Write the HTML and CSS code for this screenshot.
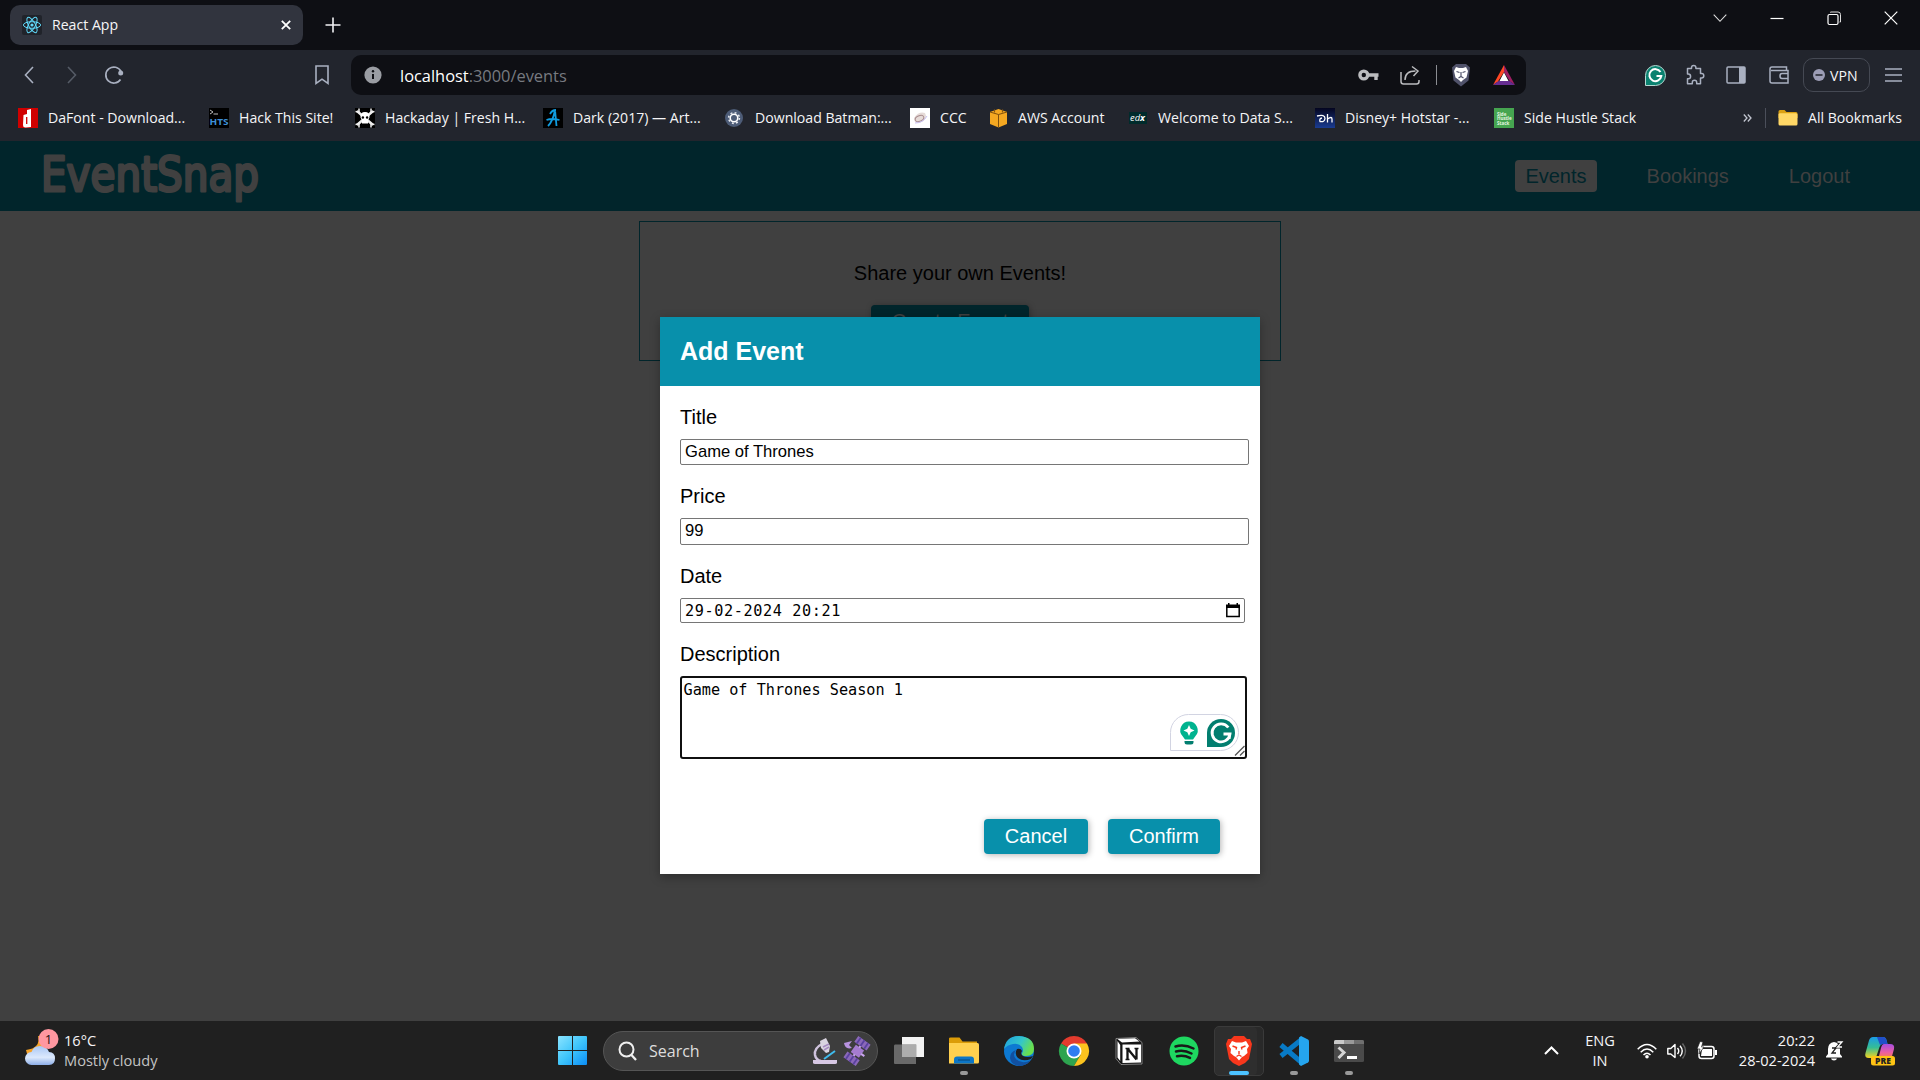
FILE: index.html
```html
<!DOCTYPE html>
<html lang="en">
<head>
<meta charset="utf-8">
<title>React App</title>
<link rel="stylesheet" href="styles.css">
</head>
<body>
<div class="tabstrip">
  <div class="tab">
    <svg class="favicon" width="20" height="20" viewBox="0 0 20 20"><rect width="20" height="20" rx="2" fill="#20232a"/><g fill="none" stroke="#61dafb" stroke-width="1"><ellipse cx="10" cy="10" rx="8.6" ry="3.3"/><ellipse cx="10" cy="10" rx="8.6" ry="3.3" transform="rotate(60 10 10)"/><ellipse cx="10" cy="10" rx="8.6" ry="3.3" transform="rotate(120 10 10)"/></g><circle cx="10" cy="10" r="1.6" fill="#61dafb"/></svg>
    <span class="tab-title">React App</span>
    <svg class="tab-close" width="10" height="10" viewBox="0 0 10 10"><path d="M.8.8l8.4 8.4M9.2.8L.8 9.2" stroke="#fff" stroke-width="1.800"/></svg>
  </div>
  <svg class="new-tab" width="16" height="16" viewBox="0 0 16 16"><path d="M8 .5v15M.5 8h15" stroke="#f2f2f4" stroke-width="1.600"/></svg>
  <div class="window-controls">
    <svg width="14" height="14" viewBox="0 0 14 14"><path d="M.7 3.700L7 10.300l6.300-6.600" fill="none" stroke="#ddd" stroke-width="1.100"/></svg>
    <svg width="14" height="14" viewBox="0 0 14 14"><path d="M.5 7.500h13" stroke="#fff" stroke-width="1.200"/></svg>
    <svg width="14" height="14" viewBox="0 0 14 14"><path d="M3.500 1.500v-.5h7.500q2.500 0 2.500 2.500v7.500h-1" fill="none" stroke="#ddd"/><rect x="1" y="3.500" width="10" height="10" rx="1.500" fill="none" stroke="#fff" stroke-width="1.200"/></svg>
    <svg width="14" height="14" viewBox="0 0 14 14"><path d="M.7.7l12.600 12.600M13.300.7L.7 13.300" stroke="#fff" stroke-width="1.200"/></svg>
  </div>
</div>

<div class="toolbar">
  <svg class="back" width="10" height="18" viewBox="0 0 10 18"><path d="M9 1L1.500 9 9 17" fill="none" stroke="#a9b0c0" stroke-width="1.600"/></svg>
  <svg class="forward" width="10" height="18" viewBox="0 0 10 18"><path d="M1 1l7.500 8L1 17" fill="none" stroke="#555b66" stroke-width="1.600"/></svg>
  <svg class="reload" width="20" height="20" viewBox="0 0 20 20"><path d="M16.500 14.500A8 8 0 1 1 17 6.500" fill="none" stroke="#a9b0c0" stroke-width="1.700"/><circle cx="16.700" cy="8" r="2.500" fill="#a9b0c0"/></svg>
  <svg class="save-page" width="14" height="20" viewBox="0 0 14 20"><path d="M1 1h12v17.500l-6-4.300-6 4.300z" fill="none" stroke="#a9b0c0" stroke-width="1.600"/></svg>
  <div class="address">
    <svg width="18" height="18" viewBox="0 0 18 18"><circle cx="9" cy="9" r="8.600" fill="#9a9da3"/><path d="M9 8v5" stroke="#0e0f13" stroke-width="2"/><circle cx="9" cy="5.200" r="1.200" fill="#0e0f13"/></svg>
    <span class="url"><b>localhost</b>:3000/events</span>
    <svg class="key" width="21" height="14" viewBox="0 0 21 14"><circle cx="5.800" cy="7" r="3.900" fill="none" stroke="#bbbcbf" stroke-width="3.400"/><path d="M10 7h10.500M18 7v5" fill="none" stroke="#bbbcbf" stroke-width="3.400"/></svg>
    <svg class="share" width="20" height="20" viewBox="0 0 20 20"><path d="M1 7v9.500Q1 19 3.500 19h13q2.500 0 2.500-2.500V15M5 15Q5 6 15.500 6M12 1.500l6 4.500-4.500 5" fill="none" stroke="#bbbcbf" stroke-width="1.500"/></svg>
    <i class="address-divider"></i>
    <svg class="shield" width="20" height="24" viewBox="0 0 20 24"><path d="M5 1h10l4 3.500-1.500 13L10 23.500 2.500 17.500 1 4.500z" fill="#50526a"/><path d="M5 4l3 1h4l3-1 2 4-1.500 6.500L12 17l-2 2-2-2-3.500-2.500L3 8z" fill="#fff"/><path d="M5.500 8.500l3 1M14.500 8.500l-3 1M10 9v4M7.500 15l2.500-1.500 2.500 1.500" fill="none" stroke="#50526a" stroke-width="1.200"/></svg>
    <svg class="bat" width="22" height="20" viewBox="0 0 22 20"><path d="M11 0L0 20l5-3.500L11 7z" fill="#ff4724"/><path d="M11 0l11 20-5-3.500L11 7z" fill="#9e1f63"/><path d="M0 20h22l-5.500-4h-11z" fill="#662d91"/><path d="M11 7.500L6.500 16h9z" fill="#fff"/></svg>
  </div>
  <div class="extensions">
    <svg width="21" height="21" viewBox="0 0 21 21"><path d="M.5 20.500V10.500a10 10 0 1 1 10 10z" fill="#0b8270" stroke="#b6d8d2"/><path d="M15.500 7a6 6 0 1 0 .8 4H11.500" fill="none" stroke="#fff" stroke-width="2"/></svg>
    <svg class="puzzle" width="20" height="20" viewBox="0 0 20 20"><path d="M2.500 3.500h4V2.700a2.200 2.200 0 0 1 4.400 0v.8h4.600v5h1.100a2.200 2.200 0 0 1 0 4.400h-1.100v5.800h-3.800v-1.200a2.200 2.200 0 0 0-4.400 0v1.200H2.500v-5h.8a2.300 2.300 0 0 0 0-4.600h-.8z" fill="none" stroke="#a9b0c0" stroke-width="1.500" stroke-linejoin="round"/></svg>
    <svg class="sidebar-icon" width="20" height="18" viewBox="0 0 20 18"><rect x="1" y="1" width="18" height="16" rx="1" fill="none" stroke="#a9b0c0" stroke-width="1.500"/><path d="M13 1h6v16h-6z" fill="#a9b0c0"/></svg>
    <svg class="wallet" width="20" height="18" viewBox="0 0 20 18"><path d="M17.500 4.500V1H3Q1 1 1 3v12q0 2 2 2h16V4.500H2M19 7.500h-6q-2 0-2 2.500t2 2.500h6" fill="none" stroke="#a9b0c0" stroke-width="1.500"/></svg>
    <div class="vpn"><svg width="12" height="12" viewBox="0 0 12 12"><circle cx="6" cy="6" r="6" fill="#9c9db5"/><path d="M2.500 6h7" stroke="#22252d" stroke-width="1.500"/></svg><span>VPN</span></div>
    <svg class="menu" width="17" height="14" viewBox="0 0 17 14"><path d="M0 1h17M0 7h17M0 13h17" stroke="#a9b0c0" stroke-width="1.500"/></svg>
  </div>
</div>

<div class="bookmarks">
  <div class="bookmark-list">
    <div class="bookmark"><svg width="20" height="20" viewBox="0 0 20 20"><rect width="20" height="20" fill="#d00000"/><path d="M9 6l-3.500 1L5 17q0 3 3 2.500l5-.5V1L9 2z" fill="#fff"/><path d="M8.700 9v7" stroke="#d00000" stroke-width="1.300"/></svg><span>DaFont - Download...</span></div>
    <div class="bookmark"><svg width="20" height="20" viewBox="0 0 20 20"><rect width="20" height="20" fill="#000"/><path d="M1 2l3 2-3 2M4.500 6H9" fill="none" stroke="#bbb"/><text x="0.500" y="17" class="hts" textLength="19" lengthAdjust="spacingAndGlyphs">HTS</text></svg><span>Hack This Site!</span></div>
    <div class="bookmark"><svg width="20" height="20" viewBox="0 0 20 20"><rect width="20" height="20" fill="#000"/><path d="M2 3l16 14M18 3L2 17" stroke="#eee" stroke-width="2.500"/><path d="M.5 3.500L4 4l0-3.500M16 .5V4l3.500-.5M.5 16.500L4 16v3.500M19.500 16.500L16 16v3.500" fill="none" stroke="#eee" stroke-width="1.500"/><path d="M10 4q5 0 4.500 5.500l-1.500 2.500V15.500H7V12l-1.500-2.500Q5 4 10 4z" fill="#fff"/><circle cx="7.900" cy="9.500" r="1.200"/><circle cx="12.100" cy="9.500" r="1.200"/></svg><span>Hackaday | Fresh H...</span></div>
    <div class="bookmark"><svg width="20" height="20" viewBox="0 0 20 20"><rect width="20" height="20" fill="#000"/><path d="M5 18Q10 13 12 2l1.500 16M7 6Q9 2 13 2M3.500 12q5-2 13 0" fill="none" stroke="#109ce0" stroke-width="1.800"/></svg><span>Dark (2017) — Art...</span></div>
    <div class="bookmark"><svg width="20" height="20" viewBox="0 0 20 20"><circle cx="9" cy="10" r="9" fill="#4d5c77"/><circle cx="9" cy="10" r="3.800" fill="none" stroke="#fff" stroke-width="1.600"/><circle cx="9" cy="10" r="5.400" fill="none" stroke="#e8ebf0" stroke-width="1.500" stroke-dasharray="1.900 2.340"/></svg><span>Download Batman:...</span></div>
    <div class="bookmark"><svg width="20" height="20" viewBox="0 0 20 20"><rect width="20" height="20" fill="#fff"/><path d="M4 10q5-7 11-5l1 3q-1 7-9 7-3-1-3-5z" fill="#e6dbd8"/><ellipse cx="9.500" cy="10.500" rx="4.500" ry="2.800" fill="none" stroke="#a98d8f" transform="rotate(-25 9.500 10.500)"/><path d="M5 15q8 0 12-7" fill="none" stroke="#c7c0f1"/></svg><span>CCC</span></div>
    <div class="bookmark"><svg width="19" height="20" viewBox="0 0 19 20"><path d="M1 4l8.500-3L18 4v12l-8.500 3.500L1 16z" fill="#f5a821"/><path d="M1 4l8.500 2.500L18 4M9.500 6.500v13" fill="none" stroke="#7f4f0d"/><path d="M5.500 1.500v3M13.500 1.500v3" stroke="#8e5a10" stroke-width="1.200"/></svg><span>AWS Account</span></div>
    <div class="bookmark"><svg width="20" height="20" viewBox="0 0 20 20"><rect x="1" y="4" width="18" height="12" fill="#002b2b"/><text x="2" y="13" class="edx" textLength="15" lengthAdjust="spacingAndGlyphs">ed<tspan font-weight="700">x</tspan></text></svg><span>Welcome to Data S...</span></div>
    <div class="bookmark"><svg width="20" height="20" viewBox="0 0 20 20"><defs><linearGradient id="dis" x2="0" y2="1"><stop stop-color="#04051f"/><stop offset="1" stop-color="#1a3c92"/></linearGradient></defs><rect width="20" height="20" fill="url(#dis)"/><path d="M2 8q8-2 8 2.500-.5 4-5 3-1-3 2-3.500M12.500 6v8.500M12.500 11q4.500-3 4.500 0v3.500" fill="none" stroke="#fff" stroke-width="1.300"/></svg><span>Disney+ Hotstar -...</span></div>
    <div class="bookmark"><svg width="20" height="20" viewBox="0 0 20 20"><rect width="20" height="20" fill="#46a550"/><g class="shs"><text x="3" y="7.500">Side</text><text x="3" y="12">Hustle</text><text x="3" y="16.500">Stack</text></g></svg><span>Side Hustle Stack</span></div>
  </div>
  <svg class="more" width="9" height="8" viewBox="0 0 9 8"><path d="M.8.5L4 4 .8 7.500M4.800.5L8 4 4.800 7.500" fill="none" stroke="#c2c6d0" stroke-width="1.300"/></svg>
  <i class="bookmark-divider"></i>
  <svg class="folder" width="20" height="16" viewBox="0 0 20 16"><path d="M.5 1.500q0-1.500 1.500-1.500h4.500l2 2H18q1.500 0 1.500 1.500V8H.5z" fill="#dba013"/><path d="M.5 4.500Q.5 3.200 2 3.200h16q1.500 0 1.500 1.500v9.300q0 1.500-1.500 1.500H2q-1.500 0-1.500-1.500z" fill="#ffd766"/></svg>
  <span class="all-bookmarks">All Bookmarks</span>
</div>

<div class="viewport">
  <header class="main-nav">
    <svg class="brand" width="220" height="64" viewBox="0 0 220 64"><text x="0" y="47" textLength="218" lengthAdjust="spacingAndGlyphs">EventSnap</text></svg>
    <nav><a class="active">Events</a><a>Bookings</a><a>Logout</a></nav>
  </header>
  <section class="events-control">
    <p>Share your own Events!</p>
    <div class="create">Create Event</div>
  </section>
  <div class="modal">
    <div class="modal-header">Add Event</div>
    <div class="form">
      <label>Title</label>
      <div class="field title">Game of Thrones</div>
      <label>Price</label>
      <div class="field price">99</div>
      <label>Date</label>
      <div class="field date"><span>29-02-2024 20:21</span><svg width="14" height="15" viewBox="0 0 14 15"><path d="M.8 4v9.500h12.400V4" fill="none" stroke="#000" stroke-width="1.500"/><path d="M0 1.500h14V5H0zM2 0h1.500v2H2zM10.500 0H12v2h-1.500z"/></svg></div>
      <label>Description</label>
      <div class="textarea">Game of Thrones Season 1
        <div class="grammarly">
          <svg width="18" height="24" viewBox="0 0 18 24"><path d="M9 .5a8.700 8.700 0 0 1 6.500 14.500L13 18.500H5L2.500 15A8.700 8.700 0 0 1 9 .5z" fill="#00b38f"/><path d="M9 4l1.700 3.800L14.500 9.500l-3.800 1.700L9 15l-1.700-3.800L3.500 9.500l3.800-1.700z" fill="#fff"/><path d="M4.500 20h9v1q0 2.500-2.500 2.500H7Q4.500 23.500 4.500 21z" fill="#027e6f"/></svg>
          <svg width="28" height="28" viewBox="0 0 28 28"><path d="M0 28V14a14 14 0 1 1 14 14z" fill="#027e6f"/><path d="M21.300 8.500a9 9 0 1 0 1.700 6.500h-6.500" fill="none" stroke="#fff" stroke-width="2.800"/><path d="M22.500 20v-5" stroke="#fff" stroke-width="2.200"/></svg>
        </div>
        <svg class="grip" width="11" height="11" viewBox="0 0 11 11"><path d="M1 10.500L10.500 1M6 10.500L10.500 6" stroke="#555" stroke-width="1.300"/></svg>
      </div>
    </div>
    <div class="actions"><div class="btn cancel">Cancel</div><div class="btn confirm">Confirm</div></div>
  </div>
</div>

<div class="taskbar">
  <div class="weather">
    <svg width="38" height="40" viewBox="0 0 38 40"><defs><linearGradient id="cl" x2="0" y2="1"><stop stop-color="#a9c7f5"/><stop offset=".6" stop-color="#dce9fc"/><stop offset="1" stop-color="#8daee8"/></linearGradient></defs><path d="M14 7q3 12-12 14 1 9 11 9 12-4 9-18-2-5-8-5z" fill="#f5a32a"/><path d="M7.500 36a6 6 0 0 1 0-13q2-6 8.500-6 7 0 9 6 6 0 6 6.500 0 6.500-6 6.500z" fill="url(#cl)"/><circle cx="24.500" cy="10" r="10" fill="#ff97a0"/><text x="24.500" y="15" text-anchor="middle" class="badge">1</text></svg>
    <div class="weather-text"><span>16°C</span><span class="muted">Mostly cloudy</span></div>
  </div>
  <div class="apps">
    <svg class="start" width="29" height="29" viewBox="0 0 29 29"><defs><linearGradient id="win" x2="1" y2="1"><stop stop-color="#8be4ff"/><stop offset=".5" stop-color="#3fc5fb"/><stop offset="1" stop-color="#0b8df5"/></linearGradient></defs><path d="M1 0h13v14H0V1q0-1 1-1zM15 0h13q1 0 1 1v13H15zM0 15h14v14H1q-1 0-1-1zM15 15h14v13q0 1-1 1H15z" fill="url(#win)"/></svg>
    <div class="search">
      <svg width="19" height="20" viewBox="0 0 19 20"><circle cx="8.500" cy="8.500" r="7" fill="none" stroke="#f0f0f0" stroke-width="2"/><path d="M13.500 14l4.500 5" stroke="#f0f0f0" stroke-width="2.300"/></svg>
      <span>Search</span>
      <svg class="scope" width="26" height="26" viewBox="0 0 26 26"><path d="M10 6Q2 10 3 17q1 5 6 6" fill="none" stroke="#cfc3dd" stroke-width="2.500"/><path d="M8 3l6-3 4 8-1 6-3 1-5-5z" fill="#d9d4e0"/><path d="M11 9l6-3M12 12l5-3" stroke="#a58bc0" stroke-width="1.500"/><path d="M12 21l11-8" stroke="#3fbcee" stroke-width="2"/><path d="M1 22h24v2.500q0 1.500-2 1.500H3q-2 0-2-1.500z" fill="#d7c8e4"/></svg>
      <svg class="satellite" width="28" height="28" viewBox="0 0 28 28"><g transform="rotate(35 14 14)"><path d="M9.500 9.500h10v9h-10z" fill="#a57cd0"/><path d="M6.500 1h15v7h-15zM6.500 20h15v7h-15z" fill="#8a68b8"/><path d="M9.500 1v7M14 1v7M18.500 1v7M9.500 20v7M14 20v7M18.500 20v7" stroke="#5a41a0" stroke-width="1.800"/><path d="M14 8v2M14 18v2M19 14h4" stroke="#c9a5ee" stroke-width="2"/></g><path d="M1 6q1 7 8 5L6 8l3-4" fill="#b792df"/></svg>
    </div>
    <svg class="taskview" width="30" height="28" viewBox="0 0 30 28"><path d="M8 0h22v20H8z" fill="#f3f3f3"/><path d="M1 7.500h21V27H1q-1 0-1-1v-17q0-1.500 1-1.500z" fill="#777" opacity=".85"/><path d="M8 7.500h14.500V20H8z" fill="#adadad"/></svg>
    <div class="app running"><svg width="30" height="28" viewBox="0 0 30 28"><path d="M0 1.500Q0 .5 1.500.5h9l3 4H28v8H0z" fill="#dc9c08"/><path d="M0 6h28.500q1.500 0 1.500 1.500v17.500q0 1.500-1.500 1.500H0z" fill="#ffd04f"/><path d="M5 26.500v-4q0-3 3-3h14q3 0 3 3v4z" fill="#0c76c7"/><path d="M9 23h12" stroke="#064679"/></svg></div>
    <div class="app"><svg width="30" height="30" viewBox="0 0 30 30"><defs><linearGradient id="ed" x2="1" y2=".4"><stop stop-color="#1e9fe0"/><stop offset=".6" stop-color="#34c6c9"/><stop offset="1" stop-color="#69df4e"/></linearGradient></defs><circle cx="15" cy="15" r="15" fill="#0d79d2"/><path d="M0 13Q2 0 15 0q15 1 15 13 0 7-8 7-5 0-4-3 2-2 0-6Q15 7 9 8 3 9 0 13z" fill="url(#ed)"/><path d="M12 14q-4 5 0 9 6 6 15 1-5 6-12 6-8-1-9-8 0-6 6-8z" fill="#1150a0"/><path d="M13 13q4-1 5 2-2 3 1 5 4 2 10 0l-2 3q-8 3-13-1-4-4-1-9z" fill="#202020"/></svg></div>
    <div class="app"><svg width="30" height="30" viewBox="0 0 30 30"><path d="M15 15L2 7.500A15 15 0 0 1 28 7.500z" fill="#e33b2e"/><path d="M15 15L2 7.500A15 15 0 0 0 15 30l6.500-11z" fill="#2da44f"/><path d="M15 7.500h13A15 15 0 0 1 15 30l6.500-11z" fill="#fcc31e"/><circle cx="15" cy="15" r="7.500" fill="#fff"/><circle cx="15" cy="15" r="5.800" fill="#2f7df1"/></svg></div>
    <div class="app"><svg width="28" height="28" viewBox="0 0 28 28"><path d="M1 1.500L21 .5l6 5V27l-21 .5-5-6z" fill="#151515" stroke="#999" stroke-width=".8"/><path d="M2.500 2L20 1.200 24.500 4.500 7 5.500z" fill="#fff"/><path d="M2.500 4L5.200 8v16l-2.700-3.500zM7.500 7.500H26v18L7.500 26z" fill="#fff"/><path d="M12.500 12v11M21.500 11v11.500M12.500 11.500l9 11" fill="none" stroke="#151515" stroke-width="2.300"/><path d="M10.500 11.500h4M19.500 11.500h4M10.500 22.500h4" stroke="#151515" stroke-width="1.400"/></svg></div>
    <div class="app"><svg width="30" height="30" viewBox="0 0 30 30"><circle cx="15" cy="15" r="14.500" fill="#1ed760"/><path d="M6.500 10.500q9-2.500 18 2M7 15.500q8-2 15.500 2M8 20.200q7-1.500 13 1.700" fill="none" stroke="#191919" stroke-width="2.500" stroke-linecap="round"/></svg></div>
    <div class="app active-app"><svg width="26" height="30" viewBox="0 0 26 30"><path d="M8 0h10l3 3 3 0 2 5-3 15-4 4-6 3-6-3-4-4L0 8l2-5h3z" fill="#f8371c"/><path d="M6 5l4 1.500h6L20 5l3 5-2 3 .5 4-3.500 3-2 1-3 3.500-3-3.500-2-1-3.500-3L5 13l-2-3z" fill="#fff"/><path d="M6.500 10l4 1.500-.5 2M19.500 10l-4 1.500.5 2M13 15v3M10.500 20.500l2.500-1.500 2.500 1.500" fill="none" stroke="#f8371c" stroke-width="1.400"/></svg></div>
    <div class="app running"><svg width="30" height="30" viewBox="0 0 30 30"><path d="M2 9l20 17M2 20L22 4" stroke="#087ac5" stroke-width="5" fill="none"/><path d="M22 0l7 3.500q1 .5 1 2v19q0 1.500-1 2L22 30l-2-1.500V1.500z" fill="#25a5ef"/></svg></div>
    <div class="app running"><svg width="30" height="22" viewBox="0 0 30 22"><rect width="30" height="22" rx="1.500" fill="#4a4a4a"/><path d="M0 1.500Q0 0 1.500 0H10v4H0z" fill="#c9c9c9"/><path d="M10 0h10v4H10z" fill="#999"/><path d="M20 0h8.500Q30 0 30 1.500V4H20z" fill="#6f6f6f"/><path d="M4.500 7.500l5.500 5-5.500 5.500" fill="none" stroke="#d5d5d5" stroke-width="3"/><path d="M13 17.500h10" stroke="#fff" stroke-width="3"/></svg></div>
  </div>
  <div class="tray">
    <svg width="15" height="9" viewBox="0 0 15 9"><path d="M1 8l6.500-6.500L14 8" fill="none" stroke="#fff" stroke-width="2"/></svg>
    <div class="lang"><span>ENG</span><span>IN</span></div>
    <svg class="wifi" width="20" height="16" viewBox="0 0 20 16"><path d="M.7 6.200q9.300-9.500 18.600 0M3.700 9.200q6.300-6.400 12.600 0M6.500 12q3.500-3.500 7 0" fill="none" stroke="#fff" stroke-width="1.500"/><circle cx="10" cy="13.800" r="1.800" fill="#fff"/></svg>
    <svg class="sound" width="20" height="18" viewBox="0 0 20 18"><path d="M.8 6.500h3L8 2.500v13L3.800 12h-3z" fill="none" stroke="#fff" stroke-width="1.400" stroke-linejoin="round"/><path d="M10.500 6q2.500 3 0 6M13 3.700q4.500 5.300 0 10.600" fill="none" stroke="#fff" stroke-width="1.400"/><path d="M15.500 1.500q6 7.500 0 15" fill="none" stroke="#666" stroke-width="1.400"/></svg>
    <svg class="battery" width="21" height="18" viewBox="0 0 21 18"><rect x="2" y="4.500" width="15" height="12" rx="2.500" fill="none" stroke="#fff" stroke-width="1.500"/><path d="M5 7h10v7H4zM18 8h2v5h-2z" fill="#fff"/><path d="M3-.5L0 7h3l-1 5 5-7H4.500l1.500-5z" fill="#fff" stroke="#202020" stroke-width=".7"/></svg>
    <div class="clock"><span>20:22</span><span>28-02-2024</span></div>
    <svg class="bell" width="18" height="20" viewBox="0 0 18 20"><path d="M8 1Q2 2 2 8v5l-2 2.500V16.500h16V15.500L14 13V8Q14 2 8 1z" fill="#fff"/><path d="M5 17.500h6q-.5 2-3 2t-3-2z" fill="#fff"/><path d="M6 7h4l-4 5h4" fill="none" stroke="#202020" stroke-width="1.300"/><path d="M11.500 1H16l-4.500 5H16" fill="none" stroke="#202020" stroke-width="3"/><path d="M11.500 1H16l-4.500 5H16" fill="none" stroke="#fff" stroke-width="1.300"/></svg>
    <svg class="copilot" width="30" height="30" viewBox="0 0 30 30"><defs><linearGradient id="ca" x2="0" y2="1"><stop stop-color="#1a9ce8"/><stop offset=".5" stop-color="#35bd95"/><stop offset="1" stop-color="#f6d31d"/></linearGradient><linearGradient id="cb" x2="0" y2="1"><stop stop-color="#a64de0"/><stop offset=".6" stop-color="#ec5fa3"/><stop offset="1" stop-color="#f98248"/></linearGradient></defs><path d="M8 1h10q2.500 0 3.500 3l1 4h-5q-2 0-3 3l-3 9q-1 2-3 2H4q-5 0-3.500-5L4 4.500Q5 1 8 1z" fill="url(#ca)"/><path d="M12 1h6q2.500 0 3.500 3l1 4h-5L15 9z" fill="#214fc9"/><path d="M19 8h6q5 0 4 5l-2.500 9H11l3-2 2-8q1-4 3-4z" fill="url(#cb)"/><rect x="6" y="20" width="24" height="9.500" rx="2.500" fill="#ffc414"/><text x="18" y="28" text-anchor="middle" class="pre">PRE</text></svg>
  </div>
</div>
</body>
</html>
```
FILE: styles.css
```css
* { box-sizing: border-box; }
body { margin: 0; width: 1920px; height: 1080px; overflow: hidden; background: #404040; font-family: "Open Sans", "Noto Sans", sans-serif; font-size: 14.100px; color: #f5f5f7; display: flex; flex-direction: column; }
svg { display: block; flex: none; overflow: visible; }
span { white-space: nowrap; }

.tabstrip { height: 50px; background: #0e0f14; display: flex; align-items: center; flex: none; }
.tab { margin-left: 10px; width: 293px; height: 40px; border-radius: 10px; background: #31343e; display: flex; align-items: center; padding: 0 12px; }
.tab-title { margin-left: 10px; padding-bottom: 2px; flex: 1; }
.new-tab { margin-left: 22px; }
.window-controls { display: flex; gap: 43px; margin: -14px 22px 0 auto; }

.toolbar { height: 50px; background: #22252d; display: flex; align-items: center; flex: none; }
.back { margin-left: 24px; }
.forward { margin-left: 33px; }
.reload { margin-left: 27px; }
.save-page { margin-left: 191px; }
.address { margin-left: 22px; width: 1175px; height: 40px; border-radius: 10px; background: #0e0f14; display: flex; align-items: center; padding: 0 11px 0 13px; }
.url { margin-left: 18px; flex: 1; font-size: 16.400px; color: #777a80; }
.url b { font-weight: 400; color: #fff; }
.share { margin-left: 21px; }
.address-divider { width: 1px; height: 20px; background: #8b8d92; margin-left: 16px; }
.shield { margin-left: 14px; }
.bat { margin-left: 22px; }
.extensions { display: flex; align-items: center; margin-left: 119px; }
.puzzle { margin-left: 19px; }
.sidebar-icon { margin-left: 21px; }
.wallet { margin-left: 23px; }
.vpn { margin-left: 14px; width: 67px; height: 34px; border: 1px solid #454953; border-radius: 10px; display: flex; align-items: center; gap: 5px; padding-left: 9px; }
.menu { margin-left: 15px; }

.bookmarks { height: 41px; background: #22252d; display: flex; align-items: center; flex: none; padding: 0 18px 5px; }
.bookmark-list { display: grid; grid-template-columns: 191px 146px 188px 182px 185px 79px 139px 187px 179px 142px; }
.bookmark { display: flex; align-items: center; gap: 10px; }
.bookmark span, .all-bookmarks { padding-bottom: 2px; }
.hts { font: 700 9px "Open Sans", sans-serif; fill: #3d8fd6; }
.edx { font: italic 9px "Open Sans", sans-serif; fill: #fff; }
.shs { font: 700 4.500px "Open Sans", sans-serif; fill: #e4f5e0; }
.more { margin-left: 107px; }
.bookmark-divider { width: 1px; height: 20px; background: #4b4f5a; margin-left: 13px; }
.folder { margin-left: 12px; }
.all-bookmarks { margin-left: 10px; }

.viewport { position: relative; height: 880px; flex: none; font-family: "Liberation Sans", Arial, sans-serif; font-size: 20px; color: #000; overflow: hidden; }
.main-nav { height: 70px; background: #01252b; display: flex; align-items: center; justify-content: space-between; padding: 0 60px 0 41px; }
.brand text { font: 48px "DejaVu Sans", sans-serif; fill: #404040; stroke: #404040; stroke-width: 3px; stroke-linejoin: round; }
.main-nav nav { display: flex; gap: 40px; color: #404040; }
.main-nav a { padding: 5px 10px 4px; border-radius: 4px; line-height: 23px; }
.main-nav .active { background: #404040; color: #01252b; }
.events-control { width: 642px; height: 140px; margin: 10px auto 0; border: 1px solid #01252b; text-align: center; }
.events-control p { margin: 40px 0 20px; line-height: 23px; }
.create { width: 158px; height: 36px; line-height: 33px; margin: 0 0 0 231px; border-radius: 4px; background: #01252b; color: #404040; box-shadow: 1px 1px 6px rgba(0,0,0,.3); }
.modal { position: absolute; left: 660px; top: 176px; width: 600px; height: 557px; background: #fff; box-shadow: 0 3px 10px rgba(0,0,0,.3); }
.modal-header { height: 69px; padding: 20px; background: #0890ab; color: #fff; font-size: 25px; font-weight: 700; line-height: 29px; }
.form { padding: 20px 0 0 20px; display: flex; flex-direction: column; }
.form label { height: 23px; line-height: 23px; margin-bottom: 10px; }
.field { width: 569px; height: 26px; border: 1px solid #767676; border-radius: 2px; padding-left: 4px; font-size: 16.600px; line-height: 23px; }
.title { margin-bottom: 20px; }
.price { height: 27px; line-height: 24px; margin-bottom: 20px; }
.date { width: 565px; height: 25px; margin-bottom: 20px; padding-right: 4px; display: flex; align-items: center; justify-content: space-between; font-family: "DejaVu Sans Mono", monospace; font-size: 15.200px; letter-spacing: .6px; }
.date span { padding-top: 1px; }
.textarea { position: relative; width: 567px; height: 83px; border: 2px solid #101010; border-radius: 3px; padding: 3px 1.500px; font: 15.200px/18px "DejaVu Sans Mono", monospace; }
.grammarly { position: absolute; right: 6px; bottom: 6px; width: 69px; height: 37px; border: 1px solid #d2d4e2; border-radius: 19px 19px 19px 0; display: flex; align-items: center; gap: 9px; padding-left: 9px; background: #fff; }
.grip { position: absolute; right: 0; bottom: 1px; }
.actions { display: flex; justify-content: flex-end; gap: 20px; margin: 60px 40px 0 0; }
.btn { height: 35px; line-height: 34px; text-align: center; color: #fff; background: #0890ab; border-radius: 4px; box-shadow: 1px 1px 6px rgba(0,0,0,.3); }
.cancel { width: 104px; }
.confirm { width: 112px; }

.taskbar { height: 59px; background: #202020; display: flex; align-items: center; flex: none; font-size: 14.600px; }
.weather { width: 558px; display: flex; padding-left: 24px; align-items: center; }
.weather svg { margin-top: -4px; }
.badge { font: 13px "Open Sans", sans-serif; fill: #201012; }
.weather-text, .lang, .clock { display: flex; flex-direction: column; line-height: 20px; padding-bottom: 2px; }
.weather-text { margin-left: 2px; }
.muted { color: #c4c4c4; }
.apps { display: flex; align-items: center; }
.search { margin-left: 16px; width: 275px; height: 40px; border: 1px solid #555; border-radius: 20px; background: #3d3d3d; display: flex; align-items: center; padding: 0 6px 0 14px; }
.search span { margin-left: 12px; flex: 1; font-size: 16px; color: #ddd; }
.satellite { margin-left: 5px; }
.taskview { margin: 0 15px 0 16px; }
.app { position: relative; width: 50px; height: 50px; margin-right: 5px; display: flex; align-items: center; justify-content: center; border-radius: 5px; }
.active-app { background: #2e2e2e; border: 1px solid #3a3a3a; box-shadow: inset -6px 0 #292929; }
.running::after, .active-app::after { content: ""; position: absolute; bottom: 1px; left: 21px; width: 8px; height: 4px; border-radius: 2px; background: #999; }
.active-app::after { width: 20px; left: 14px; bottom: 0; background: #4cc2ff; }
.tray { margin-left: auto; display: flex; align-items: center; padding-right: 25px; }
.lang { width: 40px; text-align: center; margin: 0 17px 0 21px; }
.sound { margin-left: 10px; }
.battery { margin-left: 10px; }
.clock { width: 97px; text-align: right; }
.bell { margin-left: 11px; }
.copilot { margin-left: 21px; }
.pre { font: 800 8.500px "Open Sans", sans-serif; fill: #222; }
```
